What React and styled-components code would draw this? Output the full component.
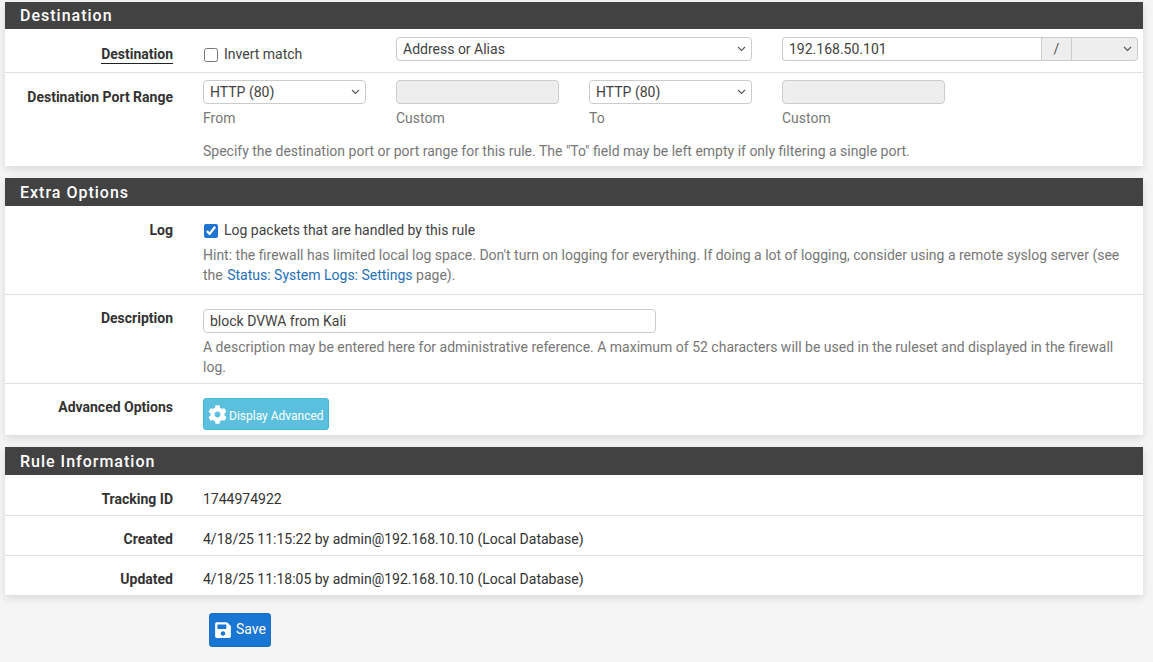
import React from "react";
import styled, { createGlobalStyle } from "styled-components";
import { FaCog, FaSave } from "react-icons/fa";

const GlobalStyle = createGlobalStyle`
  html, body {
    margin: 0;
    padding: 0;
    background: #f5f5f5;
    font-family: Roboto, "Liberation Sans", sans-serif;
    font-size: 14px;
    line-height: 20px;
    color: #333;
  }
`;

const Page = styled.div`
  padding: 2px 10px 15px 5px;
`;

const Panel = styled.section`
  background: #fff;
  margin-bottom: 12px;
  box-shadow: 0 3px 8px rgba(0, 0, 0, 0.12);
`;

const Heading = styled.h2`
  margin: 0;
  box-sizing: border-box;
  height: ${props => props.height || 28}px;
  padding: 1px 0 0 15px;
  background: #424242;
  color: #fff;
  font-size: 16px;
  font-weight: 500;
  letter-spacing: 1px;
  line-height: ${props => (props.height || 28) - 1}px;
`;

const Row = styled.div`
  display: flex;
  height: ${props => props.height}px;
  box-sizing: border-box;
  border-top: ${props => (props.first ? "none" : "1px solid #e0e0e0")};
`;

const Label = styled.div`
  width: 168px;
  flex: none;
  padding-top: ${props => props.top || 13}px;
  text-align: right;
  font-weight: 700;
`;

const LabelText = styled.span`
  border-bottom: ${props => (props.underline ? "1px solid #222" : "none")};
  padding-bottom: 1px;
`;

const Body = styled.div`
  margin-left: 30px;
  flex: 1;
  min-width: 0;
  padding-top: ${props => props.top || 13}px;
  padding-right: 20px;
`;

const Fields = styled.div`
  display: grid;
  grid-template-columns: ${props => props.columns};
  column-gap: 30px;
`;

const SelectWrap = styled.div`
  position: relative;
  width: ${props => props.width || "auto"};
`;

const Chevron = styled.svg`
  position: absolute;
  top: 9px;
  right: 6px;
  width: 9px;
  height: 6px;
  pointer-events: none;
`;

const Select = styled.select`
  display: block;
  box-sizing: border-box;
  width: 100%;
  height: 24px;
  padding: 0 6px;
  border: 1px solid #ccc;
  border-radius: ${props => props.radius || "4px"};
  border-left: ${props => (props.addon ? "none" : "1px solid #ccc")};
  background: ${props => (props.addon ? "#eee" : "#fff")};
  color: #424242;
  font: 14px/20px Roboto, sans-serif;
  appearance: none;
`;

const Input = styled.input`
  display: block;
  box-sizing: border-box;
  width: ${props => props.width || "100%"};
  height: 24px;
  padding: 0 6px;
  border: 1px solid #ccc;
  border-radius: 4px;
  background: ${props => (props.disabled ? "#eee" : "#fff")};
  color: #424242;
  font: 14px/20px Roboto, sans-serif;
`;

const AddressGroup = styled.div`
  display: flex;
`;

const AddressInput = styled(Input)`
  flex: 1;
  width: auto;
  min-width: 0;
  border-radius: 4px 0 0 4px;
  border-right: none;
`;

const Addon = styled.span`
  box-sizing: border-box;
  width: 31px;
  height: 24px;
  border: 1px solid #ccc;
  background: #eee;
  color: #555;
  text-align: center;
  line-height: 22px;
`;

const CheckLine = styled.label`
  display: flex;
  align-items: center;
  height: 20px;
  margin-top: ${props => props.top || 0}px;
  color: #424242;
`;

const CheckBox = styled.input`
  width: 14px;
  height: 14px;
  margin: 2px 6px 0 1px;
  accent-color: #1e74d2;
`;

const Caption = styled.div`
  margin-top: 4px;
  color: #777;
`;

const Help = styled.div`
  margin-top: ${props => props.top || 0}px;
  color: #777;
`;

const Link = styled.a`
  margin-left: 1px;
  color: #2470b8;
  text-decoration: none;
`;

const Value = styled.div`
  color: #333;
`;

const Button = styled.button`
  display: inline-flex;
  align-items: center;
  box-sizing: border-box;
  padding: 0 0 0 4px;
  border-radius: 3px;
  border: 1px solid ${props => props.border};
  background: ${props => props.bg};
  color: #fff;
  font-family: Roboto, sans-serif;
`;

const AdvancedButton = styled(Button)`
  width: 126px;
  height: 32px;
  font-size: 12px;
  gap: 2px;
`;

const AdvancedLabel = styled.span`
  margin-top: 3px;
`;

const SaveButton = styled(Button)`
  width: 62px;
  height: 34px;
  font-size: 14px;
  gap: 4px;
`;

const SaveLabel = styled.span`
  margin-top: -3px;
`;

const Footer = styled.div`
  padding: 6px 0 0 204px;
`;

const PortSelect = ({ value, width, addon, radius }) => (
  <SelectWrap width={width}>
    <Select defaultValue={value} addon={addon} radius={radius}>
      <option value={value}>{value}</option>
    </Select>
    <Chevron viewBox="0 0 9 6" fill="none" stroke="#555" strokeWidth="1.1">
      <path d="M1 1l3.5 3.5L8 1" />
    </Chevron>
  </SelectWrap>
);

const App = () => (
  <Page>
    <GlobalStyle />
    <Panel>
      <Heading height={27}>Destination</Heading>
      <Row first height={43}>
        <Label top={15}>
          <LabelText underline>Destination</LabelText>
        </Label>
        <Body top={8}>
          <Fields columns="163px 356px 356px">
            <CheckLine top={7}>
              <CheckBox type="checkbox" />
              Invert match
            </CheckLine>
            <PortSelect value="Address or Alias" />
            <AddressGroup>
              <AddressInput defaultValue="192.168.50.101" />
              <Addon>/</Addon>
              <PortSelect value="" width="66px" addon radius="0 4px 4px 0" />
            </AddressGroup>
          </Fields>
        </Body>
      </Row>
      <Row height={94}>
        <Label top={14}>Destination Port Range</Label>
        <Body top={7}>
          <Fields columns="repeat(4, 163px)">
            <div>
              <PortSelect value="HTTP (80)" />
              <Caption>From</Caption>
            </div>
            <div>
              <Input disabled />
              <Caption>Custom</Caption>
            </div>
            <div>
              <PortSelect value="HTTP (80)" />
              <Caption>To</Caption>
            </div>
            <div>
              <Input disabled />
              <Caption>Custom</Caption>
            </div>
          </Fields>
          <Help top={13}>
            Specify the destination port or port range for this rule. The "To" field may be left empty if only filtering a single port.
          </Help>
        </Body>
      </Row>
    </Panel>
    <Panel>
      <Heading>Extra Options</Heading>
      <Row first height={88}>
        <Label top={14}>Log</Label>
        <Body top={14}>
          <CheckLine>
            <CheckBox type="checkbox" defaultChecked />
            Log packets that are handled by this rule
          </CheckLine>
          <Help top={5}>
            Hint: the firewall has limited local log space. Don't turn on logging for everything. If doing a lot of logging, consider using a remote syslog server (see
            <br />
            the <Link href="#">Status: System Logs: Settings</Link> page).
          </Help>
        </Body>
      </Row>
      <Row height={89}>
        <Label>Description</Label>
        <Body top={14}>
          <Input width="453px" defaultValue="block DVWA from Kali" />
          <Help top={4}>
            A description may be entered here for administrative reference. A maximum of 52 characters will be used in the ruleset and displayed in the firewall log.
          </Help>
        </Body>
      </Row>
      <Row height={52}>
        <Label>Advanced Options</Label>
        <Body top={14}>
          <AdvancedButton bg="#5bc0de" border="#46b8da">
            <FaCog size={19} />
            <AdvancedLabel>Display Advanced</AdvancedLabel>
          </AdvancedButton>
        </Body>
      </Row>
    </Panel>
    <Panel>
      <Heading>Rule Information</Heading>
      <Row first height={40}>
        <Label top={14}>Tracking ID</Label>
        <Body top={14}>
          <Value>1744974922</Value>
        </Body>
      </Row>
      <Row height={40}>
        <Label>Created</Label>
        <Body>
          <Value>4/18/25 11:15:22 by admin@192.168.10.10 (Local Database)</Value>
        </Body>
      </Row>
      <Row height={40}>
        <Label>Updated</Label>
        <Body>
          <Value>4/18/25 11:18:05 by admin@192.168.10.10 (Local Database)</Value>
        </Body>
      </Row>
    </Panel>
    <Footer>
      <SaveButton bg="#1976d2" border="#1a6fc4">
        <FaSave size={18} />
        <SaveLabel>Save</SaveLabel>
      </SaveButton>
    </Footer>
  </Page>
);

export default App;
